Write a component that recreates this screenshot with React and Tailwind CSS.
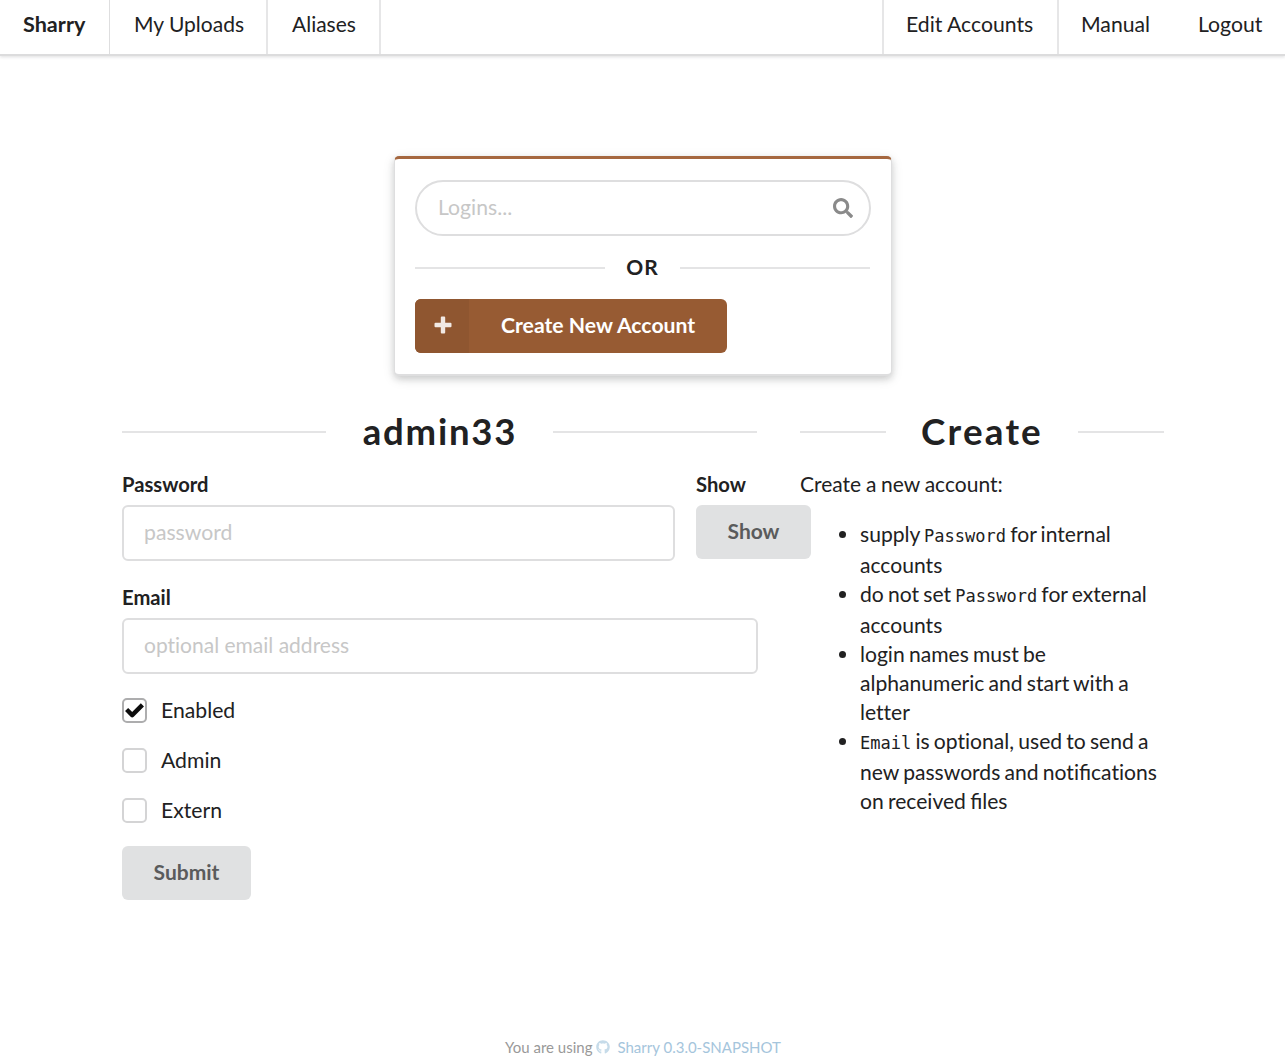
import React from "react";
import { FaGithub } from "react-icons/fa";

function Divider({ children, className }) {
  return (
    <div className={`flex items-center font-bold whitespace-nowrap ${className}`}>
      <span className="h-0.5 flex-1 bg-[#e4e4e5]" />
      {children}
      <span className="h-0.5 flex-1 bg-[#e4e4e5]" />
    </div>
  );
}

function NavItem({ children, className }) {
  return (
    <a className={`flex h-[54px] items-start pt-[9px] leading-[30px] ${className}`}>{children}</a>
  );
}

function Checkbox({ label, checked }) {
  return (
    <label className="flex h-[26px] items-start">
      <span
        className={`flex h-[25px] w-[25px] items-center justify-center rounded-[5px] border-2 bg-white ${
          checked ? "border-[#adadae]" : "border-[#d4d4d5]"
        }`}
      >
        {checked && (
          <svg viewBox="0 0 21 21" className="h-[21px] w-[21px] shrink-0" fill="none" stroke="#0d0d0d" strokeWidth="4.400">
            <path d="M2.600 9.500L8.200 15.100L18.400 4.900" strokeLinejoin="round" />
          </svg>
        )}
      </span>
      <span className="ml-[14px] text-[21.200px] leading-[24px]">{label}</span>
    </label>
  );
}

function Label({ children }) {
  return <div className="h-7 text-[20.200px] font-bold leading-[28px]">{children}</div>;
}

function Code({ children }) {
  return <code className="font-['DejaVu_Sans_Mono',monospace] text-[17px] leading-[27px]">{children}</code>;
}

export default function App() {
  return (
    <div className="flex h-[1060px] w-[1285px] flex-col overflow-hidden bg-white font-['Lato',sans-serif] text-[21px] leading-[29px] text-[#212122] [font-variant-ligatures:none]">
      <nav className="flex h-14 shrink-0 justify-between border-b-2 border-[#dcdcdd] shadow-[0_1px_3px_rgba(34,36,38,0.15)]">
        <div className="flex">
          <NavItem className="w-[110px] border-r border-[#dededf] pl-[23px] text-[21.600px] font-bold">Sharry</NavItem>
          <NavItem className="w-[158px] border-r-2 border-[#e6e6e7] pl-6">My Uploads</NavItem>
          <NavItem className="w-[113px] border-r-2 border-[#e6e6e7] pl-6">Aliases</NavItem>
        </div>
        <div className="flex text-[21.200px]">
          <NavItem className="w-[177px] border-x-2 border-[#e6e6e7] pl-[22px]">Edit Accounts</NavItem>
          <NavItem className="w-[117px] pl-[22px]">Manual</NavItem>
          <NavItem className="w-[109px] pl-[22px]">Logout</NavItem>
        </div>
      </nav>

      <main className="grow">
        <section className="mt-[100px] ml-[394px] h-[220px] w-[498px] rounded-[5px] border border-t-[3px] border-b-2 border-[#dededf] border-t-[#a5673f] bg-white px-5 pt-[21px] shadow-[0_3px_6px_rgba(34,36,38,0.14),0_3px_12px_rgba(34,36,38,0.13)]">
          <div className="flex h-14 items-center justify-between rounded-full border-2 border-[#dededf] pr-4 pl-[21px]">
            <span className="pb-px text-[21.200px] text-[#c7c7c7]">Logins...</span>
            <svg viewBox="0 0 512 512" className="h-5 w-5" fill="#8a8a8a">
              <path d="M505 442.700L405.300 343c-4.500-4.500-10.600-7-17-7H372c27.600-35.300 44-79.700 44-128C416 93.100 322.900 0 208 0S0 93.100 0 208s93.100 208 208 208c48.300 0 92.700-16.400 128-44v16.300c0 6.400 2.500 12.500 7 17l99.700 99.700c9.400 9.400 24.600 9.400 33.900 0l28.300-28.300c9.400-9.400 9.400-24.600.1-34zM208 336c-70.700 0-128-57.200-128-128 0-70.700 57.200-128 128-128 70.700 0 128 57.200 128 128 0 70.700-57.200 128-128 128z" />
            </svg>
          </div>
          <Divider className="mt-[17px] mr-px h-[29px] tracking-[1px]">
            <span className="mr-[21px] ml-[21px] pb-0.5">OR</span>
          </Divider>
          <button className="mt-[17px] flex h-[54px] w-[312px] items-center overflow-hidden rounded-[6px] bg-[#975b33] font-bold text-white">
            <span className="flex h-full w-[54px] items-center justify-center bg-[#8f5630] pb-0.5 pl-px">
              <svg viewBox="0 0 18 18" className="h-[18px] w-[18px]" fill="#f1e9e4">
                <path d="M7.800.500h2.400a1 1 0 0 1 1 1v5.300h5.300a1 1 0 0 1 1 1v2.400a1 1 0 0 1-1 1h-5.300v5.300a1 1 0 0 1-1 1H7.800a1 1 0 0 1-1-1v-5.300H1.500a1 1 0 0 1-1-1V7.800a1 1 0 0 1 1-1h5.300V1.500a1 1 0 0 1 1-1z" />
              </svg>
            </span>
            <span className="ml-8 pb-px text-[21.200px] whitespace-nowrap">Create New Account</span>
          </button>
        </section>

        <div className="ml-[122px] flex pt-8">
          <section className="w-[636px]">
            <Divider className="mr-px h-12 text-[36.500px] tracking-[1.800px]">
              <span className="mr-[36px] ml-[37px] pb-0.5">admin33</span>
            </Divider>
            <div className="mt-[14px] flex">
              <div className="w-[574px] shrink-0">
                <Label>Password</Label>
                <div className="mt-[7px] flex h-14 w-[553px] items-center rounded-[6px] border-2 border-[#dededf] px-5 pb-px text-[21.200px] text-[#c7c7c7]">
                  password
                </div>
              </div>
              <div className="shrink-0">
                <Label>Show</Label>
                <button className="mt-[7px] block h-[54px] w-[115px] rounded-[6px] bg-[#e0e1e2] pb-[3px] font-bold text-[#5a5b5c]">
                  Show
                </button>
              </div>
            </div>
            <div className="mt-[22px]">
              <Label>Email</Label>
            </div>
            <div className="mt-[7px] flex h-14 items-center rounded-[6px] border-2 border-[#dededf] px-5 pb-[3px] text-[#c7c7c7]">
              optional email address
            </div>
            <div className="mt-6 flex flex-col gap-6">
              <Checkbox label="Enabled" checked />
              <Checkbox label="Admin" />
              <Checkbox label="Extern" />
            </div>
            <button className="mt-[22px] block h-[54px] w-[129px] rounded-[6px] bg-[#e0e1e2] pb-[3px] font-bold text-[#5a5b5c]">
              Submit
            </button>
          </section>

          <section className="ml-[42px] w-[364px]">
            <Divider className="h-12 text-[36.800px] tracking-[2.200px]">
              <span className="mr-[35px] ml-[35px] pb-0.5">Create</span>
            </Divider>
            <p className="mt-[13px] [word-spacing:-0.600px]">Create a new account:</p>
            <ul className="mt-[21px] list-disc pl-[60px] text-[21.100px] [word-spacing:-1.200px]">
              <li>supply <Code>Password</Code> for internal accounts</li>
              <li>do not set <Code>Password</Code> for external accounts</li>
              <li>login names must be alphanumeric and start with a letter</li>
              <li>
                <Code>Email</Code> is optional, used to send a new passwords and noti
                <span className="[font-variant-ligatures:common-ligatures]">fi</span>cations on received{" "}
                <span className="[font-variant-ligatures:common-ligatures]">fi</span>les
              </li>
            </ul>
          </section>
        </div>
      </main>

      <footer className="flex h-6 shrink-0 items-start justify-center pl-px text-[15px] leading-[22px] text-[#999]">
        <span>You are using</span>
        <FaGithub className="mt-1 ml-1 h-[14px] w-[14px] text-[#c6dbe9]" />
        <span className="ml-[7px] text-[#a5c5dc]">Sharry 0.3.0-SNAPSHOT</span>
      </footer>
    </div>
  );
}
